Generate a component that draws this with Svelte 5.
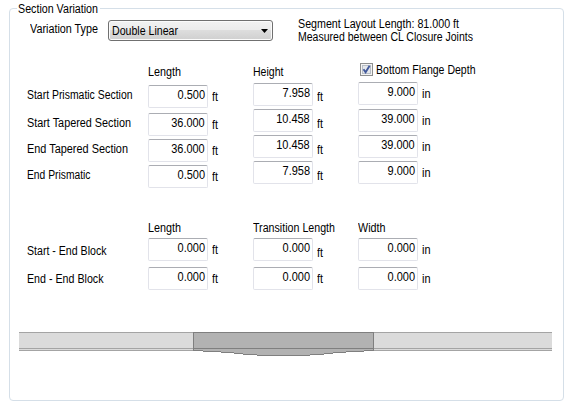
<script>
  // Condenses a label horizontally so it occupies the given dialog width.
  function fit(node, width) {
    const natural = node.getBoundingClientRect().width;
    if (natural) node.style.transform = `scaleX(${width / natural})`;
  }

  const labels = [
    { text: 'Start Prismatic Section', w: 105.5, gap: 0 },
    { text: 'Start Tapered Section', w: 104, gap: 14 },
    { text: 'End Tapered Section', w: 101, gap: 12 },
    { text: 'End Prismatic', w: 63.5, gap: 12 }
  ];

  const sections = [
    {
      title: 'Length', w: 33, unit: 'ft', cls: 'length',
      rows: [
        { v: '0.500', gap: 6, drop: 5 },
        { v: '36.000', gap: 5, drop: 5 },
        { v: '36.000', gap: 3, drop: 5 },
        { v: '0.500', gap: 3, drop: 5 }
      ]
    },
    {
      title: 'Height', w: 30.5, unit: 'ft', cls: 'height',
      rows: [
        { v: '7.958', gap: 4, drop: 7 },
        { v: '10.458', gap: 3, drop: 8 },
        { v: '10.458', gap: 3, drop: 8 },
        { v: '7.958', gap: 3, drop: 8 }
      ]
    },
    {
      title: 'Bottom Flange Depth', w: 99.5, unit: 'in', cls: 'flange', check: true,
      rows: [
        { v: '9.000', gap: 5, drop: 5 },
        { v: '39.000', gap: 4, drop: 5 },
        { v: '39.000', gap: 3, drop: 5 },
        { v: '9.000', gap: 3, drop: 5 }
      ]
    }
  ];

  const blocks = [
    { title: 'Length', w: 33, unit: 'ft', cls: 'length', rows: [{ v: '0.000', gap: 3, drop: 5 }, { v: '0.000', gap: 6, drop: 5 }] },
    { title: 'Transition Length', w: 82, unit: 'ft', cls: 'height', rows: [{ v: '0.000', gap: 3, drop: 8 }, { v: '0.000', gap: 6, drop: 5 }] },
    { title: 'Width', w: 27.5, unit: 'in', cls: 'flange', rows: [{ v: '0.000', gap: 3, drop: 5 }, { v: '0.000', gap: 6, drop: 5 }] }
  ];
</script>

{#snippet column(c)}
  <div class="col {c.cls}">
    <div class="head" class:checked={c.check}>
      {#if c.check}
        <svg class="box" width="13" height="13" viewBox="0 0 13 13">
          <rect x="0.5" y="0.5" width="12" height="12" fill="#f4f4f4" stroke="#8e8f8f" />
          <rect x="2.5" y="2.5" width="8" height="8" fill="#e4e7eb" stroke="#b8bec6" />
          <path d="M3.5 6.2 L5.6 9.2 L9.6 2.8" fill="none" stroke="#42599b" stroke-width="1.9" />
        </svg>
      {/if}
      <span class="t" use:fit={c.w}>{c.title}</span>
    </div>
    {#each c.rows as r}
      <div class="field" style="margin-top: {r.gap}px">
        <div class="input"><span class="t" use:fit={r.v.length > 5 ? 33.5 : 27.5}>{r.v}</span></div>
        <div class="unit" style="padding-top: {r.drop}px">
          <span class="t" use:fit={c.unit === 'ft' ? 6 : 8.5}>{c.unit}</span>
        </div>
      </div>
    {/each}
  </div>
{/snippet}

<div class="page">
  <fieldset>
    <legend><span class="t" use:fit={80}>Section Variation</span></legend>

    <div class="top">
      <div class="type"><span class="t" use:fit={68}>Variation Type</span></div>
      <div class="select">
        <span class="t" use:fit={66}>Double Linear</span>
        <svg width="7" height="4" viewBox="0 0 7 4"><path d="M0 0H7L3.5 4Z" fill="#000" /></svg>
      </div>
      <div class="info">
        <div><span class="t" use:fit={161}>Segment Layout Length: 81.000 ft</span></div>
        <div><span class="t" use:fit={175}>Measured between CL Closure Joints</span></div>
      </div>
    </div>

    <div class="grid">
      <div class="labels">
        {#each labels as l}
          <div style="margin-top: {l.gap}px"><span class="t" use:fit={l.w}>{l.text}</span></div>
        {/each}
      </div>
      {#each sections as c}{@render column(c)}{/each}
    </div>

    <div class="grid second">
      <div class="labels">
        <div><span class="t" use:fit={79.5}>Start - End Block</span></div>
        <div class="next"><span class="t" use:fit={76.5}>End - End Block</span></div>
      </div>
      {#each blocks as c}{@render column(c)}{/each}
    </div>

    <svg class="beam" width="533" height="24" viewBox="0 0 533 24" shape-rendering="crispEdges">
      <rect width="533" height="19" fill="#dbdbdb" />
      <path d="M0 .5H533M0 16.5H533M0 18.5H533" stroke="#a4a4a4" />
      <path d="M174 0H355V19H345V20H327V21H314V22H305V23H291V24H238V23H224V22H215V21H202V20H184V19H174Z" fill="#b2b2b2" />
      <path
        d="M174 .5H355M174 16.5H355M174.5 0V19M354.5 0V19M174 18.5H184M184 19.5H202M202 20.5H215M215 21.5H224M224 22.5H238M238 23.5H291M291 22.5H305M305 21.5H314M314 20.5H327M327 19.5H345M345 18.5H355"
        fill="none"
        stroke="#7f7f7f"
      />
    </svg>
  </fieldset>
</div>

<style>
  :global(body) {
    background: #fff;
  }
  .page {
    box-sizing: border-box;
    width: 572px;
    height: 407px;
    padding: 2px 8px 6px 9px;
    background: #fff;
    font: 12px/14px 'Liberation Sans', Arial, sans-serif;
    color: #000;
    overflow: hidden;
  }
  .t {
    display: inline-block;
    white-space: pre;
    transform-origin: 0 0;
    flex: none;
  }
  fieldset {
    box-sizing: border-box;
    width: 555px;
    height: 399px;
    margin: 0;
    padding: 0;
    min-width: 0;
    border: 1px solid #d5dfe8;
    border-radius: 4px;
  }
  legend {
    display: block;
    width: 83px;
    height: 13px;
    margin-left: 7px;
    padding: 0 0 0 1px;
    box-sizing: border-box;
  }
  .top {
    display: flex;
    height: 43px;
    padding-top: 3px;
    box-sizing: border-box;
  }
  .type {
    width: 78px;
    padding: 4px 0 0 20px;
  }
  .select {
    box-sizing: border-box;
    display: flex;
    justify-content: space-between;
    width: 165px;
    height: 21px;
    margin-top: 2px;
    padding: 3px 4px 0 3px;
    border: 1px solid #707070;
    border-radius: 3px;
    background: linear-gradient(#f2f2f2, #ebebeb 50%, #dddddd 50%, #cfcfcf);
    box-shadow: inset 0 0 0 1px #fbfbfb;
  }
  .select svg {
    margin-top: 5px;
  }
  .info {
    padding-left: 25px;
    margin-top: -1px;
  }
  .info div {
    height: 13px;
  }
  .grid {
    display: flex;
    height: 161px;
    padding-left: 17px;
    padding-top: 5px;
    box-sizing: border-box;
  }
  .labels {
    width: 121px;
    padding-top: 25px;
  }
  .labels div {
    height: 14px;
  }
  .col {
    width: 105px;
    flex: none;
  }
  .head {
    display: flex;
    height: 14px;
    padding-top: 2px;
  }
  .checked {
    padding: 0 0 0 2px;
  }
  .box {
    display: block;
    flex: none;
    margin-right: 3px;
  }
  .field {
    display: flex;
    height: 23px;
  }
  .input {
    box-sizing: border-box;
    width: 60px;
    height: 23px;
    padding: 2px 2px 0 0;
    border: 1px solid #e2e3ea;
    border-top-color: #abadb3;
    border-radius: 2px;
    text-align: right;
  }
  .input .t {
    transform-origin: 100% 0;
  }
  .unit {
    padding-left: 4px;
  }
  .second {
    height: 113px;
    padding-top: 0;
  }
  .second .labels .next {
    margin-top: 14px;
  }
  .beam {
    display: block;
    margin-left: 9px;
  }
</style>
